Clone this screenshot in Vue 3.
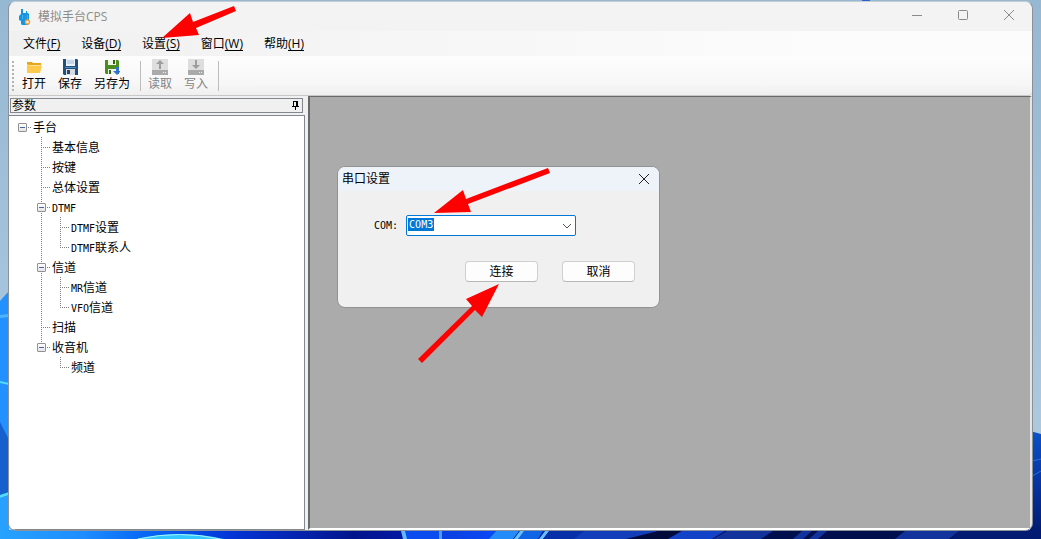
<script setup>
import { ref, computed } from 'vue'

const menus = [
  { label: '文件', key: 'F' },
  { label: '设备', key: 'D' },
  { label: '设置', key: 'S' },
  { label: '窗口', key: 'W' },
  { label: '帮助', key: 'H' },
]

const tree = ref({
  latin: '',
  text: '手台',
  open: true,
  children: [
    { latin: '', text: '基本信息' },
    { latin: '', text: '按键' },
    { latin: '', text: '总体设置' },
    {
      latin: 'DTMF',
      text: '',
      open: true,
      children: [
        { latin: 'DTMF', text: '设置' },
        { latin: 'DTMF', text: '联系人' },
      ],
    },
    {
      latin: '',
      text: '信道',
      open: true,
      children: [
        { latin: 'MR', text: '信道' },
        { latin: 'VFO', text: '信道' },
      ],
    },
    { latin: '', text: '扫描' },
    { latin: '', text: '收音机', open: true, children: [{ latin: '', text: '频道' }] },
  ],
})

const branches = computed(() => (tree.value.open ? tree.value.children : []))
const port = ref('COM3')
</script>

<template>
  <div class="desktop">
    <svg class="wallpaper" viewBox="0 0 1041 539" preserveAspectRatio="none" aria-hidden="true">
      <defs>
        <linearGradient id="sky" x1="0" y1="0" x2="0" y2="1">
          <stop offset="0" stop-color="#96b8d3" />
          <stop offset="1" stop-color="#b3cde1" />
        </linearGradient>
        <linearGradient id="floor" x1="0" y1="0" x2="1" y2="0">
          <stop offset="0" stop-color="#27a2ff" />
          <stop offset="0.08" stop-color="#1d8dff" />
          <stop offset="0.14" stop-color="#0867f5" />
          <stop offset="0.22" stop-color="#0435d8" />
          <stop offset="0.34" stop-color="#02148c" />
          <stop offset="0.38" stop-color="#0317a0" />
        </linearGradient>
        <linearGradient id="side" x1="0" y1="0" x2="0" y2="1">
          <stop offset="0" stop-color="#0c52c8" />
          <stop offset="0.5" stop-color="#0634a0" />
          <stop offset="1" stop-color="#021769" />
        </linearGradient>
        <linearGradient id="petal" x1="0" y1="0" x2="1" y2="0">
          <stop offset="0" stop-color="#0a3fe0" />
          <stop offset="1" stop-color="#0a48f5" />
        </linearGradient>
      </defs>
      <rect width="1041" height="539" fill="url(#sky)" />
      <path d="M862 0h8v1h-8z" fill="#2c63c8" />
      <path d="M0 301l9-10v248H0z" fill="#2290ff" />
      <path d="M0 315l9-1v3l-9 1z" fill="#4cb4ff" />
      <path d="M0 381l9 2v2l-9-2z" fill="#52ddff" />
      <path d="M0 422l9 18v54l-9 2z" fill="#1560cc" />
      <path d="M0 495l9-3v3l-9 3z" fill="#53dcff" />
      <path d="M0 498l9-3v44H0z" fill="#27a0ff" />
      <rect y="530" width="1041" height="9" fill="url(#floor)" />
      <path d="M136 539q44-10 88 0z" fill="#35c8ff" />
      <path d="M138 539q42-9 82 0" fill="none" stroke="#a7f2ff" />
      <path d="M401 531h38l3 8h-38z" fill="#0b4cf0" />
      <path d="M401 531h4l2 8h-4z" fill="#62b9ff" />
      <path d="M439 531h57l-6 8h-51z" fill="url(#petal)" />
      <path d="M439 531h3v8h-3z" fill="#4e9cff" />
      <path d="M496 531h23l-6 8h-24z" fill="#238cf8" />
      <path d="M521 531h22l-5 8h-24z" fill="#0f65e4" />
      <path d="M520 531h4l-6 8h-4zM545 531h4l-6 8h-4z" fill="#65c0ff" />
      <path d="M550 531h34l-9 8h-32z" fill="#0730a8" />
      <path d="M584 531h74l-20 8h-64z" fill="#123ebc" />
      <path d="M658 531h24l-14 8h-42z" fill="#000b3c" />
      <path d="M682 531h43l-13 8h-44z" fill="#1242c7" />
      <path d="M725 531h316v8H712z" fill="#010e4d" />
      <path d="M727 531h46l-12 8h-48zM802 531h10l-9 8h-10zM818 531h9l-9 8h-9zM905 531h54l-10 8h-54z" fill="#12339c" />
      <path d="M1030 431l11 3v105h-11z" fill="url(#side)" />
      <path d="M1032 461l9-2M1032 476l9-5" stroke="#2a70dc" />
      <path d="M959 531h82v8h-90z" fill="#031a72" />
    </svg>

    <main class="window">
      <header class="titlebar">
        <svg class="app-icon" viewBox="0 0 16 18" aria-hidden="true">
          <path d="M3 1h2v4h3V3h1v2h1l1 1v10l-1 1H4l-1-1v-3l-2-1V8l2-2z" fill="#1596e5" />
          <path d="M4 7h6v4H4z" fill="#3ab4f2" />
          <path d="M5 8h4M5 10h4" stroke="#0877c1" />
          <circle cx="9.500" cy="14" r="2" fill="#f4f2ef" stroke="#efa341" stroke-width="1.500" />
        </svg>
        <h1 class="title">模拟手台CPS</h1>
        <div class="caption-buttons">
          <button type="button" aria-label="最小化">
            <svg viewBox="0 0 12 12"><path d="M1 6.500h10" /></svg>
          </button>
          <button type="button" aria-label="最大化">
            <svg viewBox="0 0 12 12"><rect x="1.500" y="1.500" width="9" height="9" rx="1" /></svg>
          </button>
          <button type="button" aria-label="关闭">
            <svg viewBox="0 0 12 12"><path d="M1 1l10 10M11 1L1 11" /></svg>
          </button>
        </div>
      </header>

      <nav class="menubar">
        <button v-for="m in menus" :key="m.key" type="button">{{ m.label }}<u>({{ m.key }})</u></button>
      </nav>

      <div class="toolbar" role="toolbar">
        <span class="grip"></span>
        <button type="button">
          <svg viewBox="0 0 16 16" aria-hidden="true">
            <path d="M1 3h5l1 1h8v2H1z" fill="#e5a520" />
            <path d="M3 6h13l-2 8H1V5h1z" fill="#ffca4b" />
            <path d="M3 6h12v1H3z" fill="#ffe394" />
          </svg>
          打开
        </button>
        <button type="button">
          <svg viewBox="0 0 16 16" aria-hidden="true">
            <path d="M1 0h14l1 1v15H2l-1-1z" fill="#234f7b" />
            <path d="M4 0h9v7H4z" fill="#e9f2fa" />
            <path d="M5 2h7M5 4h7" stroke="#9db9d2" />
            <path d="M3 8h11v1H3z" fill="#4b8bc0" />
            <path d="M4 10h9v6H4z" fill="#d6dce2" />
            <path d="M5 11h3v4H5z" fill="#284966" />
          </svg>
          保存
        </button>
        <button type="button">
          <svg viewBox="0 0 16 16" aria-hidden="true">
            <path d="M1 1h13l1 1v13H2l-1-1z" fill="#4b8d1e" />
            <path d="M4 1h8v5H4z" fill="#eef6e8" />
            <path d="M9 1h2v4H9z" fill="#32600f" />
            <path d="M4 10h8v5H4z" fill="#eef1ec" />
            <path d="M5 11h2v4H5z" fill="#356a14" />
            <path d="M12 8h3v4h2l-4 4-4-4h3z" fill="#2f74d0" />
          </svg>
          另存为
        </button>
        <span class="separator"></span>
        <button type="button" disabled>
          <svg viewBox="0 0 16 16" aria-hidden="true">
            <path d="M0 0h16v11H0z" fill="#dedede" />
            <path d="M0 11h16v5H0z" fill="#aaa" />
            <path d="M8 1l4 4H9v5H7V5H4z" fill="#9d9d9d" />
            <path d="M11 13h1v1h-1zM13 13h1v1h-1z" fill="#eee" />
          </svg>
          读取
        </button>
        <button type="button" disabled>
          <svg viewBox="0 0 16 16" aria-hidden="true">
            <path d="M0 0h16v11H0z" fill="#dedede" />
            <path d="M0 11h16v5H0z" fill="#aaa" />
            <path d="M8 10l4-4H9V1H7v5H4z" fill="#9d9d9d" />
            <path d="M11 13h1v1h-1zM13 13h1v1h-1z" fill="#eee" />
          </svg>
          写入
        </button>
        <span class="separator"></span>
      </div>

      <div class="body">
        <aside class="side">
          <header class="panel-title">
            <h2>参数</h2>
            <button type="button" aria-label="固定">
              <svg viewBox="0 0 7 9" aria-hidden="true">
                <path d="M1 0h5v5h1v1H4v3H3V6H0V5h1z" fill="#000" />
                <path d="M2 1h2v4H2z" fill="#f0f0f0" />
              </svg>
            </button>
          </header>
          <div class="tree">
            <div class="row root">
              <button
                type="button"
                class="toggle"
                :aria-expanded="tree.open"
                aria-label="手台"
                @click="tree.open = !tree.open"
              ></button>
              <i class="stub"></i>
              <span>{{ tree.text }}</span>
            </div>
            <ul class="level">
              <li v-for="(n, i) in branches" :key="i">
                <div class="row">
                  <button
                    v-if="n.children"
                    type="button"
                    class="toggle"
                    :aria-expanded="n.open"
                    :aria-label="n.latin + n.text"
                    @click="n.open = !n.open"
                  ></button>
                  <i class="stub"></i>
                  <span><b v-if="n.latin">{{ n.latin }}</b>{{ n.text }}</span>
                </div>
                <ul v-if="n.children && n.open" class="level">
                  <li v-for="(c, j) in n.children" :key="j">
                    <div class="row">
                      <i class="stub"></i>
                      <span><b v-if="c.latin">{{ c.latin }}</b>{{ c.text }}</span>
                    </div>
                  </li>
                </ul>
              </li>
            </ul>
          </div>
        </aside>

        <section class="workspace">
          <form class="dialog" role="dialog" aria-labelledby="dialog-title" @submit.prevent>
            <header>
              <h2 id="dialog-title">串口设置</h2>
              <button type="button" aria-label="关闭">
                <svg viewBox="0 0 12 12"><path d="M1 1l10 10M11 1L1 11" /></svg>
              </button>
            </header>
            <div class="field">
              <label for="port">COM:</label>
              <div class="combo">
                <select id="port" v-model="port">
                  <option>COM3</option>
                </select>
                <svg viewBox="0 0 10 6" aria-hidden="true"><path d="M1 1l4 4 4-4" /></svg>
              </div>
            </div>
            <footer>
              <button type="submit">连接</button>
              <button type="button">取消</button>
            </footer>
          </form>
        </section>
      </div>
    </main>

    <svg class="arrows" width="1041" height="539" viewBox="0 0 1041 539" aria-hidden="true">
      <path d="M234 6l2 5-40 17 3 7-37 3 28-25 3 9z" />
      <path d="M548 168l2 5-82 31 3 8-37 1 29-23 3 9z" />
      <path d="M422 363l-4-4 54-53-6-7 33-15-17 33-7-7z" />
    </svg>
  </div>
</template>

<style>
body {
  margin: 0;
}
</style>

<style scoped>
* {
  box-sizing: border-box;
}
.desktop {
  position: relative;
  display: flex;
  min-height: 100vh;
  padding: 1px 8px 8px;
  overflow: hidden;
  font: 12px/16px 'Open Sans', 'Noto Sans CJK SC', sans-serif;
  color: #000;
}
button {
  margin: 0;
  padding: 0;
  border: 0;
  background: none;
  font: inherit;
  color: inherit;
}
h1,
h2 {
  margin: 0;
  font: inherit;
}
.wallpaper {
  position: absolute;
  inset: 0;
  width: 100%;
  height: 100%;
}
.window {
  position: relative;
  flex: 1;
  display: flex;
  flex-direction: column;
  min-width: 0;
  border: 1px solid #8b9198;
  border-top-color: #c5cdd4;
  border-radius: 8px;
  background: #f0f0f0;
  overflow: hidden;
}
.titlebar {
  display: flex;
  align-items: center;
  height: 29px;
  padding-left: 9px;
  background: #f3f3f3;
  color: #8c8c8c;
}
.app-icon {
  width: 16px;
  height: 18px;
  margin-right: 4px;
}
.caption-buttons {
  display: flex;
  align-self: flex-start;
  margin-left: auto;
}
.caption-buttons button {
  display: grid;
  place-items: center;
  width: 46px;
  height: 26px;
}
.caption-buttons svg,
.dialog header svg {
  width: 12px;
  height: 12px;
  fill: none;
  stroke: #8a8a8a;
}
.menubar {
  display: flex;
  gap: 1px;
  height: 25px;
  padding-left: 4px;
  background: linear-gradient(to right, #f0f0f0, #fcfcfc 80%);
}
.menubar button {
  padding: 0 10px;
}
.menubar u {
  text-underline-offset: 2px;
}
.toolbar {
  display: flex;
  align-items: center;
  height: 40px;
  padding: 0 3px;
  border-bottom: 1px solid #c8c8c8;
  border-radius: 0 0 4px 0;
  background: linear-gradient(#fdfdfd, #f7f7f7 70%, #efefef);
}
.grip {
  width: 2px;
  height: 30px;
  margin-right: 2px;
  background: repeating-linear-gradient(#b4b4b4 0 2px, transparent 2px 4px);
}
.toolbar button {
  display: flex;
  flex-direction: column;
  align-items: center;
  gap: 1px;
  padding: 0 6px;
}
.toolbar button:disabled {
  color: #838383;
}
.toolbar svg {
  width: 16px;
  height: 16px;
}
.separator {
  width: 1px;
  height: 30px;
  margin: 0 1px 0 4px;
  background: #bdbdbd;
}
.body {
  flex: 1;
  display: flex;
  min-height: 0;
  gap: 3px;
}
.side {
  display: flex;
  flex-direction: column;
  width: 296px;
  flex: none;
}
.panel-title {
  display: flex;
  align-items: center;
  justify-content: space-between;
  height: 15px;
  margin: 2px 2px 2px 1px;
  padding: 0 3px 0 1px;
  border: 1px solid #828790;
  line-height: 12px;
}
.panel-title svg {
  display: block;
  width: 7px;
  height: 9px;
}
.tree {
  flex: 1;
  padding: 1px 0 0 9px;
  border: 1px solid #828790;
  border-left: 0;
  background: #fff;
}
ul {
  margin: 0;
  padding: 0;
  list-style: none;
}
.level {
  padding-left: 19px;
}
.level li {
  background: repeating-linear-gradient(#808080 0 1px, transparent 1px 2px) 4px 0 / 1px 100% no-repeat;
}
.level li:last-child {
  background-size: 1px 10px;
}
.row {
  display: flex;
  align-items: center;
  height: 20px;
  white-space: nowrap;
}
.row span {
  padding-top: 2px;
}
.toggle {
  width: 9px;
  height: 9px;
  flex: none;
  border: 1px solid #919191;
  border-radius: 1px;
  background: linear-gradient(#4b63a7, #4b63a7) center / 5px 1px no-repeat, linear-gradient(#fff, #e4e4e4);
}
.stub {
  width: 9px;
  height: 1px;
  margin: 0 2px 0 4px;
  background: repeating-linear-gradient(to right, #808080 0 1px, transparent 1px 2px);
}
.toggle + .stub {
  width: 3px;
  margin: 0 2px 0 1px;
}
b,
label,
select {
  font: 10px/14px 'DejaVu Sans Mono', monospace;
}
.workspace {
  position: relative;
  flex: 1;
  min-width: 0;
  border: 2px solid #696969;
  border-width: 1px 2px 2px;
  border-right-color: #e6e6e6;
  border-bottom-color: #fff;
  background: #ababab;
}
.dialog {
  position: absolute;
  left: 27px;
  top: 69px;
  width: 323px;
  border: 1px solid #929292;
  border-radius: 8px;
  background: #f0f0f0;
  overflow: hidden;
}
.dialog header {
  display: flex;
  align-items: center;
  justify-content: space-between;
  height: 24px;
  padding: 0 9px 0 4px;
  background: #eef3fa;
}
.dialog header button {
  display: flex;
}
.dialog header svg {
  stroke: #222;
}
.field {
  display: flex;
  align-items: center;
  gap: 8px;
  margin: 24px 0 0 36px;
}
.combo {
  position: relative;
  display: flex;
  width: 170px;
}
select {
  appearance: none;
  width: 100%;
  height: 21px;
  padding: 0 20px 2px 2px;
  border: 1px solid #0078d7;
  border-radius: 2px;
  outline: 0;
  background: linear-gradient(#0078d7, #0078d7) 1px 2px / 26px 13px no-repeat #fff;
  color: #fff;
}
.combo svg {
  position: absolute;
  right: 4px;
  top: 8px;
  width: 10px;
  height: 6px;
  fill: none;
  stroke: #555;
}
.dialog footer {
  display: flex;
  justify-content: flex-end;
  gap: 24px;
  padding: 25px 24px;
}
.dialog footer button {
  width: 73px;
  height: 21px;
  border: 1px solid #cfcfcf;
  border-bottom-color: #b8b8b8;
  border-radius: 4px;
  background: #fdfdfd;
}
.arrows {
  position: absolute;
  left: 0;
  top: 0;
  fill: #f00;
  pointer-events: none;
}
</style>
